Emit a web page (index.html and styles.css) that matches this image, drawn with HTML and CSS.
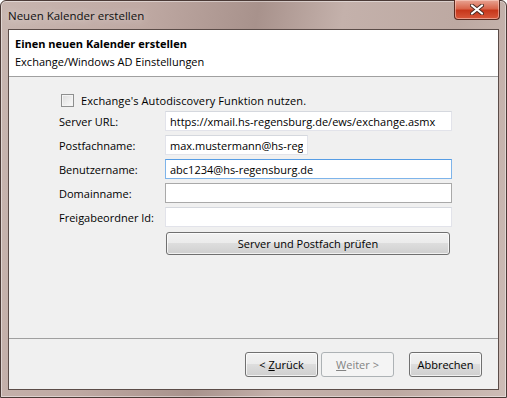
FILE: index.html
```html
<!DOCTYPE html>
<html lang="de">
<head>
  <meta charset="UTF-8">
  <title>Neuen Kalender erstellen</title>
  <link rel="stylesheet" href="styles.css">
</head>
<body>
  <div class="window">
    <div class="titlebar">
      <span class="title">Neuen Kalender erstellen</span>
      <button type="button" class="close" aria-label="Schließen">
        <svg width="14" height="11" viewBox="0 0 14 11">
          <path d="M2 1.5 L12 9.5 M12 1.5 L2 9.5" stroke="#4a2a22" stroke-width="4" stroke-linecap="round"/>
          <path d="M2 1.5 L12 9.5 M12 1.5 L2 9.5" stroke="#fff" stroke-width="2.2" stroke-linecap="round"/>
        </svg>
      </button>
    </div>

    <div class="client">
      <header class="wizard-head">
        <h1>Einen neuen Kalender erstellen</h1>
        <p>Exchange/Windows AD Einstellungen</p>
      </header>

      <main class="wizard-body">
        <label class="check">
          <span class="box"></span>
          Exchange's Autodiscovery Funktion nutzen.
        </label>

        <div class="form">
          <label>Server URL:</label>
          <input type="text" value="https://xmail.hs-regensburg.de/ews/exchange.asmx">
          <label>Postfachname:</label>
          <input type="text" class="short" value="max.mustermann@hs-reg">
          <label>Benutzername:</label>
          <input type="text" class="focus" value="abc1234@hs-regensburg.de">
          <label>Domainname:</label>
          <input type="text" class="hover" value="">
          <label>Freigabeordner Id:</label>
          <input type="text" value="">
          <span></span>
          <button type="button" class="btn wide">Server und Postfach prüfen</button>
        </div>
      </main>

      <footer class="wizard-foot">
        <button type="button" class="btn">&lt; <u>Z</u>urück</button>
        <button type="button" class="btn" disabled><u>W</u>eiter &gt;</button>
        <button type="button" class="btn cancel">Abbrechen</button>
      </footer>
    </div>
  </div>
</body>
</html>
```

FILE: styles.css
```css
html, body {
  margin: 0;
  padding: 0;
}

body {
  font-family: "Open Sans", "Noto Sans", sans-serif;
  font-size: 11px;
  color: #000;
}

.window {
  width: 507px;
  height: 398px;
  box-sizing: border-box;
  display: flex;
  flex-direction: column;
  padding: 0 7px 7px 7px;
  border: 1px solid #4b3a36;
  border-radius: 6px 6px 0 0;
  background: linear-gradient(100deg, #c8b6b0 0%, #bfa9a3 25%, #a8928c 45%, #c4b1ab 60%, #bda9a2 80%, #cdbcb6 100%);
  box-shadow: inset 0 0 0 1px rgba(255, 255, 255, 0.45);
}

.titlebar {
  height: 28px;
  display: flex;
  align-items: flex-start;
  justify-content: space-between;
}

.title {
  margin-top: 7px;
  font-size: 11.5px;
  color: #101010;
  text-shadow: 0 0 8px rgba(255, 255, 255, 0.7);
}

.close {
  width: 46px;
  height: 20px;
  margin-right: -1px;
  margin-top: -1px;
  padding: 0;
  border: 1px solid #5a2a20;
  border-top: none;
  border-radius: 0 0 4px 4px;
  background: linear-gradient(#e8a493 0%, #d9664c 45%, #c7371b 55%, #d8583b 100%);
  box-shadow: inset 0 0 0 1px rgba(255, 220, 210, 0.5);
  display: flex;
  align-items: center;
  justify-content: center;
}

.client {
  flex: 1;
  display: flex;
  flex-direction: column;
  background: #f0f0f0;
  border: 1px solid #5b4c48;
}

.wizard-head {
  background: #fff;
  border-bottom: 1px solid #a0a0a0;
  padding: 6px 6px 6px;
  height: 34px;
}

.wizard-head h1 {
  margin: 0;
  font-size: 11px;
  font-weight: bold;
  line-height: 16px;
}

.wizard-head p {
  margin: 2px 0 0;
  line-height: 16px;
}

.wizard-body {
  flex: 1;
  padding: 15px 0 0 50px;
  border-bottom: 1px solid #a0a0a0;
}

.check {
  display: flex;
  align-items: center;
  gap: 7px;
  margin-left: 2px;
  height: 16px;
  letter-spacing: 0.1px;
}

.box {
  width: 11px;
  height: 11px;
  border: 1px solid #8e8f8f;
  background: linear-gradient(135deg, #dcdcdc, #fbfbfb);
  box-shadow: inset 0 0 0 1px #f4f4f4;
}

.form {
  margin-top: 3px;
  display: grid;
  grid-template-columns: 106px 287px;
  row-gap: 4px;
  align-items: center;
}

.form input {
  height: 20px;
  box-sizing: border-box;
  margin: 0;
  padding: 0 4px;
  border: 1px solid #e2e3ea;
  border-top-color: #d5d8de;
  background: #fff;
  font: inherit;
  color: #000;
  outline: none;
}

.form input.short {
  width: 143px;
}

.form input.focus {
  border-color: #7eb4ea;
  border-top-color: #569de5;
}

.form input.hover {
  border-color: #a9a9a9;
}

.btn {
  height: 23px;
  padding: 0 8px;
  font: inherit;
  color: #000;
  border: 1px solid #707070;
  border-radius: 3px;
  background: linear-gradient(#f2f2f2 0%, #ebebeb 49%, #dddddd 50%, #cfcfcf 100%);
  box-shadow: inset 0 0 0 1px rgba(255, 255, 255, 0.7);
}

.btn.wide {
  width: 284px;
  margin-left: 1px;
  margin-top: 1px;
}

.btn[disabled] {
  color: #838383;
  border-color: #adb2b5;
  background: #f4f4f4;
  box-shadow: none;
}

.wizard-foot {
  height: 50px;
  display: flex;
  align-items: center;
  padding-left: 236px;
  gap: 3px;
}

.wizard-foot .btn {
  width: 73px;
  height: 25px;
  padding: 0;
}

.wizard-foot .cancel {
  margin-left: 12px;
}
```
